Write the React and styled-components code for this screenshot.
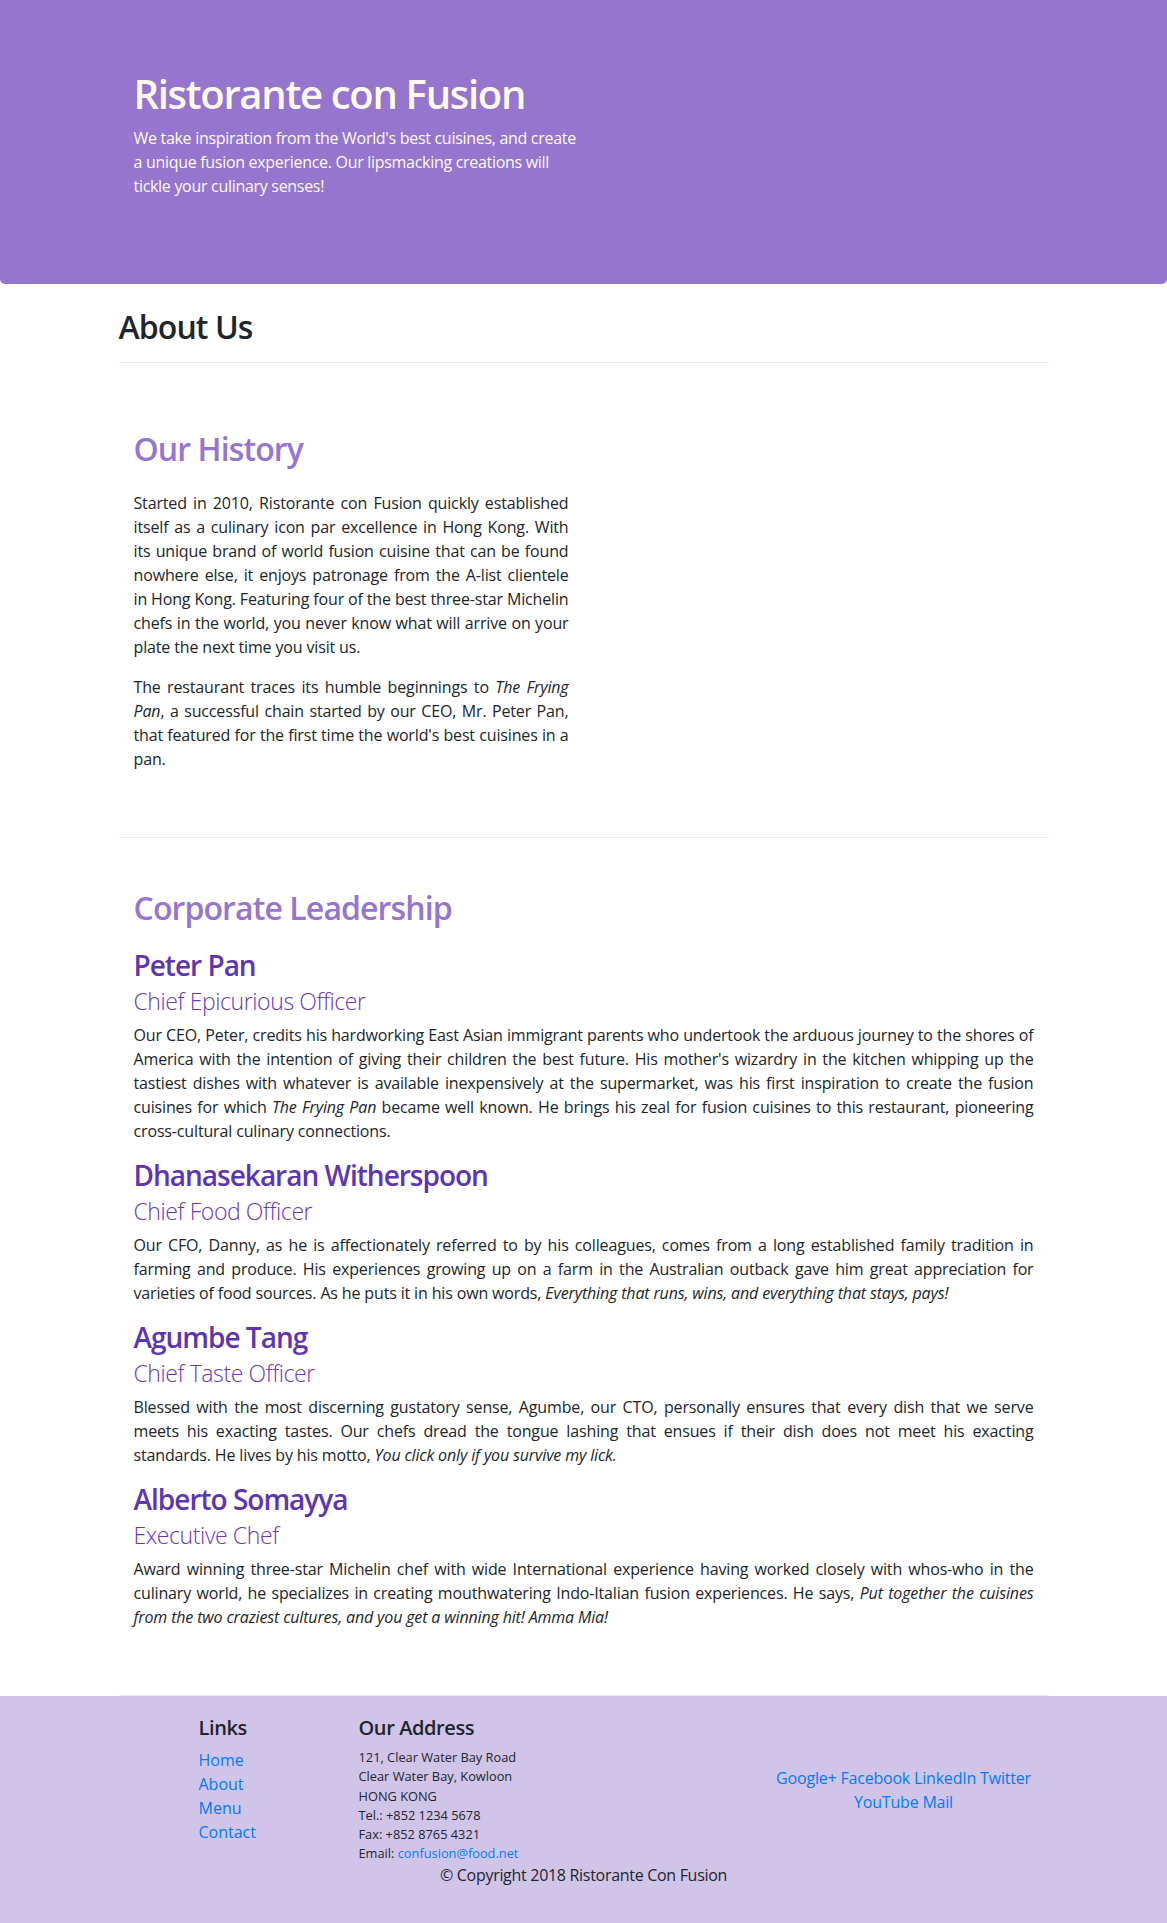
import React from "react";
import styled, { createGlobalStyle } from "styled-components";

const GlobalStyle = createGlobalStyle`
  * {
    box-sizing: border-box;
  }
  body {
    margin: 0;
    background: #fff;
    color: #212529;
    font-family: "Open Sans", "Liberation Sans", sans-serif;
    font-size: 16px;
    line-height: 1.5;
  }
  a {
    color: #007bff;
    text-decoration: none;
  }
`;

const leaders = [
  {
    name: "Peter Pan",
    role: "Chief Epicurious Officer",
    text: (
      <>
        Our CEO, Peter, credits his hardworking East Asian immigrant parents
        who undertook the arduous journey to the shores of America with the
        intention of giving their children the best future. His mother's
        wizardry in the kitchen whipping up the tastiest dishes with whatever
        is available inexpensively at the supermarket, was his first
        inspiration to create the fusion cuisines for which <em>The Frying Pan</em>{" "}
        became well known. He brings his zeal for fusion cuisines to this
        restaurant, pioneering cross-cultural culinary connections.
      </>
    ),
  },
  {
    name: "Dhanasekaran Witherspoon",
    role: "Chief Food Officer",
    text: (
      <>
        Our CFO, Danny, as he is affectionately referred to by his colleagues,
        comes from a long established family tradition in farming and produce.
        His experiences growing up on a farm in the Australian outback gave him
        great appreciation for varieties of food sources. As he puts it in his
        own words,{" "}
        <em>Everything that runs, wins, and everything that stays, pays!</em>
      </>
    ),
  },
  {
    name: "Agumbe Tang",
    role: "Chief Taste Officer",
    text: (
      <>
        Blessed with the most discerning gustatory sense, Agumbe, our CTO,
        personally ensures that every dish that we serve meets his exacting
        tastes. Our chefs dread the tongue lashing that ensues if their dish
        does not meet his exacting standards. He lives by his motto,{" "}
        <em>You click only if you survive my lick.</em>
      </>
    ),
  },
  {
    name: "Alberto Somayya",
    role: "Executive Chef",
    text: (
      <>
        Award winning three-star Michelin chef with wide International
        experience having worked closely with whos-who in the culinary world,
        he specializes in creating mouthwatering Indo-Italian fusion
        experiences. He says,{" "}
        <em>
          Put together the cuisines from the two craziest cultures, and you get
          a winning hit! Amma Mia!
        </em>
      </>
    ),
  },
];

const socials = ["Google+", "Facebook", "LinkedIn", "Twitter", "YouTube", "Mail"];

export default function App() {
  return (
    <>
      <GlobalStyle />
      <Jumbotron>
        <Container>
          <HeroCol>
            <HeroTitle>Ristorante con Fusion</HeroTitle>
            <HeroText>
              We take inspiration from the World's best cuisines, and create a
              unique fusion experience. Our lipsmacking creations will tickle
              your culinary senses!
            </HeroText>
          </HeroCol>
        </Container>
      </Jumbotron>

      <Container>
        <PageTitle>About Us</PageTitle>
        <Rule />

        <Section>
          <HalfCol>
            <SectionHeading>Our History</SectionHeading>
            <Para>
              Started in 2010, Ristorante con Fusion quickly established itself
              as a culinary icon par excellence in Hong Kong. With its unique
              brand of world fusion cuisine that can be found nowhere else, it
              enjoys patronage from the A-list clientele in Hong Kong.
              Featuring four of the best three-star Michelin chefs in the
              world, you never know what will arrive on your plate the next
              time you visit us.
            </Para>
            <Para>
              The restaurant traces its humble beginnings to{" "}
              <em>The Frying Pan</em>, a successful chain started by our CEO,
              Mr. Peter Pan, that featured for the first time the world's best
              cuisines in a pan.
            </Para>
          </HalfCol>
        </Section>

        <Section>
          <SectionHeading>Corporate Leadership</SectionHeading>
          <LeaderList>
            {leaders.map((l) => (
              <li key={l.name}>
                <LeaderName>{l.name}</LeaderName>
                <LeaderRole>{l.role}</LeaderRole>
                <Para>{l.text}</Para>
              </li>
            ))}
          </LeaderList>
        </Section>
      </Container>

      <Footer>
        <FooterInner>
          <FooterRow>
            <LinksCol>
              <FooterHeading>Links</FooterHeading>
              <LinkList>
                <li><a href="#">Home</a></li>
                <li><a href="#">About</a></li>
                <li><a href="#">Menu</a></li>
                <li><a href="#">Contact</a></li>
              </LinkList>
            </LinksCol>
            <AddressCol>
              <FooterHeading>Our Address</FooterHeading>
              <Address>
                121, Clear Water Bay Road<br />
                Clear Water Bay, Kowloon<br />
                HONG KONG<br />
                Tel.: +852 1234 5678<br />
                Fax: +852 8765 4321<br />
                Email: <a href="#">confusion@food.net</a>
              </Address>
            </AddressCol>
            <SocialCol>
              {socials.map((s, i) => (
                <React.Fragment key={s}>
                  <a href="#">{s}</a>
                  {i < socials.length - 1 ? " " : ""}
                </React.Fragment>
              ))}
            </SocialCol>
          </FooterRow>
          <Copyright>© Copyright 2018 Ristorante Con Fusion</Copyright>
        </FooterInner>
      </Footer>
    </>
  );
}

const Jumbotron = styled.header`
  background: #9575cd;
  color: floralwhite;
  padding: 70px 30px;
  border-radius: 0 0 5px 5px;
`;

const Container = styled.div`
  max-width: 960px;
  margin: 0 auto;
  padding: 0 15px;
`;

const HeroCol = styled.div`
  width: 480px;
  padding: 0 15px;
`;

const HeroTitle = styled.h1`
  margin: 0 0 8px;
  font-size: 40px;
  font-weight: 600;
  line-height: 1.2;
  letter-spacing: -1.3px;
`;

const HeroText = styled.p`
  margin: 0 0 16px;
  letter-spacing: -0.3px;
`;

const PageTitle = styled.h2`
  margin: 24px 0 8px;
  font-size: 32px;
  font-weight: 600;
  line-height: 1.2;
  letter-spacing: -0.9px;
`;

const Rule = styled.hr`
  height: 0;
  margin: 16px 0;
  border: 0;
  border-top: 1px solid rgba(0, 0, 0, 0.1);
`;

const Section = styled.section`
  padding: 51px 15px 50px;
  border-bottom: 1px solid #e9e9e9;
`;

const HalfCol = styled.div`
  width: 50%;
  padding-right: 15px;
`;

const SectionHeading = styled.h2`
  margin: 0 0 22px;
  color: #9575cd;
  font-size: 32px;
  font-weight: 600;
  line-height: 1.2;
  letter-spacing: -0.9px;
`;

const Para = styled.p`
  margin: 0 0 16px;
  text-align: justify;
  letter-spacing: -0.15px;
`;

const LeaderList = styled.ul`
  margin: 0;
  padding: 0;
  list-style: none;
`;

const LeaderName = styled.h3`
  margin: 0 0 5.5px;
  color: #5e35b1;
  font-size: 28px;
  font-weight: 600;
  line-height: 1.2;
  letter-spacing: -1px;
`;

const LeaderRole = styled.h4`
  margin: 0 0 8.5px;
  color: #673ab7;
  font-size: 23px;
  font-weight: 300;
  line-height: 26.4px;
  letter-spacing: -0.4px;
`;

const Footer = styled.footer`
  background: #d1c4e9;
  padding: 20px 0;
`;

const FooterInner = styled.div`
  max-width: 960px;
  margin: 0 auto;
`;

const FooterRow = styled.div`
  display: flex;
`;

const LinksCol = styled.div`
  width: 160px;
  margin-left: 80px;
  padding: 0 15px;
`;

const AddressCol = styled.div`
  width: 400px;
  padding: 0 15px;
`;

const SocialCol = styled.div`
  width: 320px;
  padding: 0 15px;
  align-self: center;
  text-align: center;
  letter-spacing: -0.2px;
`;

const FooterHeading = styled.h5`
  margin: 0 0 8px;
  font-size: 20px;
  font-weight: 600;
  line-height: 1.2;
  letter-spacing: -0.4px;
`;

const LinkList = styled.ul`
  margin: 0;
  padding: 0;
  list-style: none;
`;

const Address = styled.address`
  margin: 0;
  font-size: 12.8px;
  font-style: normal;
  line-height: 1.5;
`;

const Copyright = styled.p`
  margin: 0 0 16px;
  text-align: center;
  letter-spacing: -0.3px;
`;
